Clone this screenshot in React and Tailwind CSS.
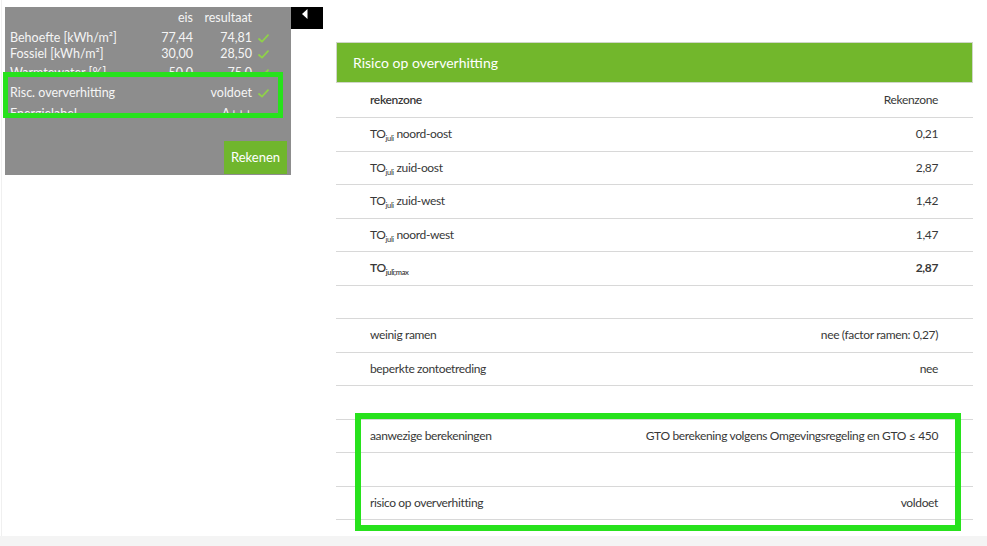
import React from "react";

const topRows = [
  { label: "Behoefte [kWh/m²]", eis: "77,44", res: "74,81", ok: true },
  { label: "Fossiel [kWh/m²]", eis: "30,00", res: "28,50", ok: true },
  { label: "Warmtewater [%]", eis: "50,0", res: "75,0", ok: true },
];

function Check() {
  return (
    <svg width="11" height="9" viewBox="0 0 11 9" className="ml-[6px]">
      <path d="M1 5 L4 7.6 L10 1.2" fill="none" stroke="#8fd14a" strokeWidth="1.8" strokeLinecap="round" strokeLinejoin="round" />
    </svg>
  );
}

function SmallRow({ label, eis, res, ok, extra }) {
  return (
    <div className={"grid h-[16px] grid-cols-[123px_60px_59px_1fr] items-center leading-[16px] " + extra}>
      <span className="whitespace-nowrap">{label}</span>
      <span className="text-right">{eis}</span>
      <span className="text-right">{res}</span>
      <span className="flex items-center">{ok && <Check />}</span>
    </div>
  );
}

function TO({ sub, bold, text }) {
  return (
    <span className={bold ? "font-semibold" : ""}>
      TO
      <span className="relative top-[3px] text-[7.5px]">{sub}</span>
      {text && " " + text}
    </span>
  );
}

function Row({ left, right, bold, first }) {
  return (
    <div
      className={
        "flex items-center justify-between border-b border-[#d8d8d8] pl-[34px] pr-[35px] " +
        (first ? "h-[35px]" : "h-[33.5px]")
      }
    >
      <span>{left}</span>
      <span className={bold ? "font-bold" : ""}>{right}</span>
    </div>
  );
}

export default function App() {
  return (
    <div className="flex h-[546px] w-[987px] flex-col overflow-hidden bg-white font-['Lato','Open_Sans',sans-serif]">
      <div className="ml-[1px] flex flex-1 items-start border-l border-[#f0f0f0]">
        {/* samenvatting links */}
        <div className="ml-[3px] mt-[7px] flex items-start">
          <div className="relative flex h-[168px] w-[286px] flex-col bg-[#8d8d8d] text-[12.5px] text-[#f5f5f5]">
            <SmallRow label="" eis="eis" res="resultaat" extra="mt-[3px] pl-[5px]" />
            {topRows.map((r, i) => (
              <SmallRow
                key={i}
                {...r}
                extra={(i === 0 ? "mt-[4px] " : i === 2 ? "mt-[3px] " : "") + "pl-[5px]"}
              />
            ))}

            {/* markering */}
            <div className="absolute left-[-2px] top-[65px] h-[46px] w-[280px] overflow-hidden border-[5px] border-[#27e21c] bg-[#8d8d8d]">
              <SmallRow label="Risc. oververhitting" eis="" res="voldoet" ok extra="mt-[8px] pl-[2px]" />
              <SmallRow label="Energielabel" eis="" res="A+++" extra="mt-[5px] pl-[2px]" />
            </div>

            <button className="mb-[1px] mr-[4px] mt-auto h-[33px] w-[63px] self-end bg-[#70b62d] text-[13px] text-white">
              Rekenen
            </button>
          </div>
          <div className="h-[22px] w-[32px] bg-black pl-[11px] pt-[2px]">
            <svg width="6" height="10" viewBox="0 0 6 10">
              <polygon points="5.5,0 5.5,10 0,5" fill="#ffffff" />
            </svg>
          </div>
        </div>

        {/* risico op oververhitting */}
        <div className="relative ml-[13px] mt-[42px] w-[637px] text-[12px] tracking-[-0.35px] text-[#383838]">
          <div className="flex h-[41px] items-center border border-[#cfd6c8] bg-[#72b72c] pl-[16px] text-[14px] tracking-normal text-white">
            Risico op oververhitting
          </div>
          <Row first left={<span className="font-semibold">rekenzone</span>} right="Rekenzone" />
          <Row left={<TO sub="juli" text="noord-oost" />} right="0,21" />
          <Row left={<TO sub="juli" text="zuid-oost" />} right="2,87" />
          <Row left={<TO sub="juli" text="zuid-west" />} right="1,42" />
          <Row left={<TO sub="juli" text="noord-west" />} right="1,47" />
          <Row left={<TO sub="juli;max" bold />} right="2,87" bold />
          <Row left="" right="" />
          <Row left="weinig ramen" right="nee (factor ramen: 0,27)" />
          <Row left="beperkte zontoetreding" right="nee" />
          <Row left="" right="" />
          <Row left="aanwezige berekeningen" right="GTO berekening volgens Omgevingsregeling en GTO ≤ 450" />
          <Row left="" right="" />
          <Row left="risico op oververhitting" right="voldoet" />

          <div className="absolute left-[19px] top-[371px] h-[118px] w-[606px] border-[6px] border-[#27e21c]"></div>
        </div>
      </div>
      <div className="h-[10px] bg-[#f4f4f4]"></div>
    </div>
  );
}
